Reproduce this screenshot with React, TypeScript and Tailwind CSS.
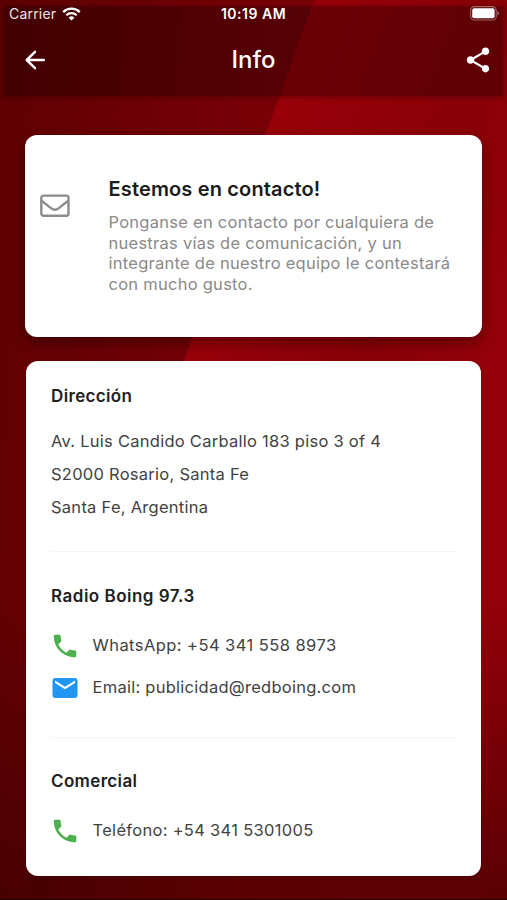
import type { ReactNode } from "react";
import { MdEmail, MdPhone, MdShare } from "react-icons/md";

function WifiIcon() {
  return (
    <svg width="19" height="14" viewBox="0 0 19 14" fill="none" stroke="white" strokeWidth="2.3">
      <path d="M1.2 5.1a11.8 11.8 0 0 1 16.6 0" />
      <path d="M4.3 8.3a7.4 7.4 0 0 1 10.4 0" />
      <path d="M9.5 13.6 6.6 10.7a4.1 4.1 0 0 1 5.8 0z" fill="white" stroke="none" />
    </svg>
  );
}

function BatteryIcon() {
  return (
    <svg width="30" height="15" viewBox="0 0 30 15" fill="none">
      <rect x="0.6" y="0.6" width="25.6" height="13.4" rx="3.8" stroke="white" strokeOpacity="0.4" strokeWidth="1.1" />
      <rect x="2.2" y="2.3" width="22.4" height="10" rx="2" fill="white" />
      <path d="M27.4 5v4.6c1-.4 1.7-1.3 1.7-2.3s-.7-1.9-1.7-2.3z" fill="white" fillOpacity="0.4" />
    </svg>
  );
}

function BackIcon() {
  return (
    <svg width="30" height="30" viewBox="0 0 24 24" fill="white">
      <path d="M19 11H7.83l4.88-4.88c.39-.39.39-1.03 0-1.42a.996.996 0 0 0-1.41 0l-6.59 6.59a.996.996 0 0 0 0 1.41l6.59 6.59a.996.996 0 1 0 1.41-1.41L7.83 13H19c.55 0 1-.45 1-1s-.45-1-1-1z" />
    </svg>
  );
}

function EnvelopeIcon() {
  return (
    <svg
      className="mt-[17px] shrink-0 text-[#8c8c8c]"
      width="30"
      height="23"
      viewBox="0 0 30 23"
      fill="none"
      stroke="currentColor"
      strokeWidth="2.4"
    >
      <rect x="1.3" y="1.6" width="27.2" height="20.2" rx="2.2" />
      <path d="M1.6 6.8 11.3 14.4c2.4 1.8 4.8 1.8 7.2 0L28.2 6.8" />
    </svg>
  );
}

function Background() {
  return (
    <svg className="absolute inset-0" width="507" height="900" viewBox="0 0 507 900">
      <defs>
        <linearGradient id="dark" gradientUnits="userSpaceOnUse" x1="0" y1="0" x2="280" y2="20">
          <stop offset="0" stopColor="#5e0002" />
          <stop offset="1" stopColor="#7a0007" />
        </linearGradient>
        <linearGradient id="bright" gradientUnits="userSpaceOnUse" x1="290" y1="110" x2="540" y2="210">
          <stop offset="0" stopColor="#970009" />
          <stop offset="0.6" stopColor="#890007" />
          <stop offset="1" stopColor="#930009" />
        </linearGradient>
        <linearGradient id="lower" gradientUnits="userSpaceOnUse" x1="0" y1="0" x2="0" y2="900">
          <stop offset="0.67" stopColor="#3a0002" stopOpacity="0" />
          <stop offset="1" stopColor="#3a0002" stopOpacity="0.65" />
        </linearGradient>
        <linearGradient id="floor" x1="0" y1="0" x2="1" y2="0">
          <stop offset="0" stopColor="#480002" />
          <stop offset="0.45" stopColor="#5a0002" />
          <stop offset="1" stopColor="#5c0004" />
        </linearGradient>
      </defs>
      <rect width="507" height="900" fill="url(#dark)" />
      <path d="M314 0H507V900H26V800z" fill="url(#bright)" />
      <rect width="507" height="900" fill="url(#lower)" />
      <rect x="26" y="860" width="455" height="40" fill="url(#floor)" />
      <rect y="899" width="507" height="1" fill="#2a0001" />
    </svg>
  );
}

function Section({ title, className, children }: { title: string; className?: string; children: ReactNode }) {
  return (
    <section>
      <h2 className={`text-[17px] leading-[22px] font-semibold text-[#212121] ${className ?? "tracking-[0.35px]"}`}>
        {title}
      </h2>
      {children}
    </section>
  );
}

function ContactRow({ icon, text, className }: { icon: ReactNode; text: string; className?: string }) {
  return (
    <div className="flex h-[42px] items-center gap-[13px]">
      {icon}
      <span className={`pb-[1.5px] text-[16.5px] whitespace-nowrap ${className ?? "tracking-[0.26px]"}`}>{text}</span>
    </div>
  );
}

export default function App() {
  return (
    <div className="relative h-[900px] w-[507px] overflow-hidden bg-[#600003] font-['Inter',sans-serif] text-[#424242]">
      <Background />

      <div className="relative flex h-full flex-col">
        {/* Status bar + title */}
        <header className="h-[96px] px-[4px] pt-[7px] text-white">
          <div className="flex h-[89px] flex-col bg-black/30 shadow-[0_0_5px_1px_rgba(0,0,0,0.3)]">
            <div className="-mt-px grid h-[12px] grid-cols-[1fr_auto_1fr] items-center px-[5px] text-[14px] leading-[14px]">
              <div className="flex items-center gap-[6px]">
                <span className="tracking-[0.2px] text-white/90">Carrier</span>
                <WifiIcon />
              </div>
              <span className="text-center font-semibold tracking-[0.5px]">10:19 AM</span>
              <div className="-mr-[2px] flex justify-end">
                <BatteryIcon />
              </div>
            </div>
            <div className="mt-[19px] grid h-[46px] grid-cols-[1fr_auto_1fr] items-center pr-[10px] pl-[16px]">
              <BackIcon />
              <h1 className="-ml-[6px] pb-px text-center text-[24px] font-medium">Info</h1>
              <MdShare size={30} className="justify-self-end" />
            </div>
          </div>
        </header>

        {/* Intro card */}
        <div className="mx-[25px] mt-[39px] flex h-[202px] rounded-[12px] bg-white pt-[42px] pl-[15px] shadow-[0_6px_14px_rgba(0,0,0,0.35)]">
          <EnvelopeIcon />
          <div className="ml-[38.5px] whitespace-nowrap">
            <h2 className="text-[20px] leading-[24px] font-semibold tracking-[0.15px] text-[#1c1c1c]">
              Estemos en contacto!
            </h2>
            <p className="mt-[10.8px] text-[16.5px] leading-[20.8px] tracking-[0.26px] text-[#8a8a8a]">
              Ponganse en contacto por cualquiera de
              <br />
              nuestras vías de comunicación, y un
              <br />
              integrante de nuestro equipo le contestará
              <br />
              con mucho gusto.
            </p>
          </div>
        </div>

        {/* Contact details */}
        <div className="mx-[26px] mt-[24px] h-[515px] rounded-[12px] bg-white px-[25px] pt-[24px] shadow-[0_1px_3px_rgba(0,0,0,0.2)]">
          <Section title="Dirección">
            <div className="mt-[18px] text-[16.5px] leading-[33px] tracking-[0.26px]">
              <p>Av. Luis Candido Carballo 183 piso 3 of 4</p>
              <p>S2000 Rosario, Santa Fe</p>
              <p>Santa Fe, Argentina</p>
            </div>
          </Section>

          <hr className="mt-[27px] mb-[33px] border-[#f5f5f5]" />

          <Section title="Radio Boing 97.3" className="tracking-[0.5px]">
            <div className="mt-[18px]">
              <ContactRow
                icon={<MdPhone size={30} className="-ml-[1.5px] text-[#4caf50]" />}
                text="WhatsApp: +54 341 558 8973"
                className="tracking-[0.44px]"
              />
              <ContactRow
                icon={<MdEmail size={30} className="-ml-[1.5px] text-[#2196f3]" />}
                text="Email: publicidad@redboing.com"
              />
            </div>
          </Section>

          <hr className="mt-[28px] mb-[32px] border-[#f5f5f5]" />

          <Section title="Comercial">
            <div className="mt-[18px]">
              <ContactRow
                icon={<MdPhone size={30} className="-ml-[1.5px] text-[#4caf50]" />}
                text="Teléfono: +54 341 5301005"
                className="tracking-[0.3px]"
              />
            </div>
          </Section>
        </div>
      </div>
    </div>
  );
}
